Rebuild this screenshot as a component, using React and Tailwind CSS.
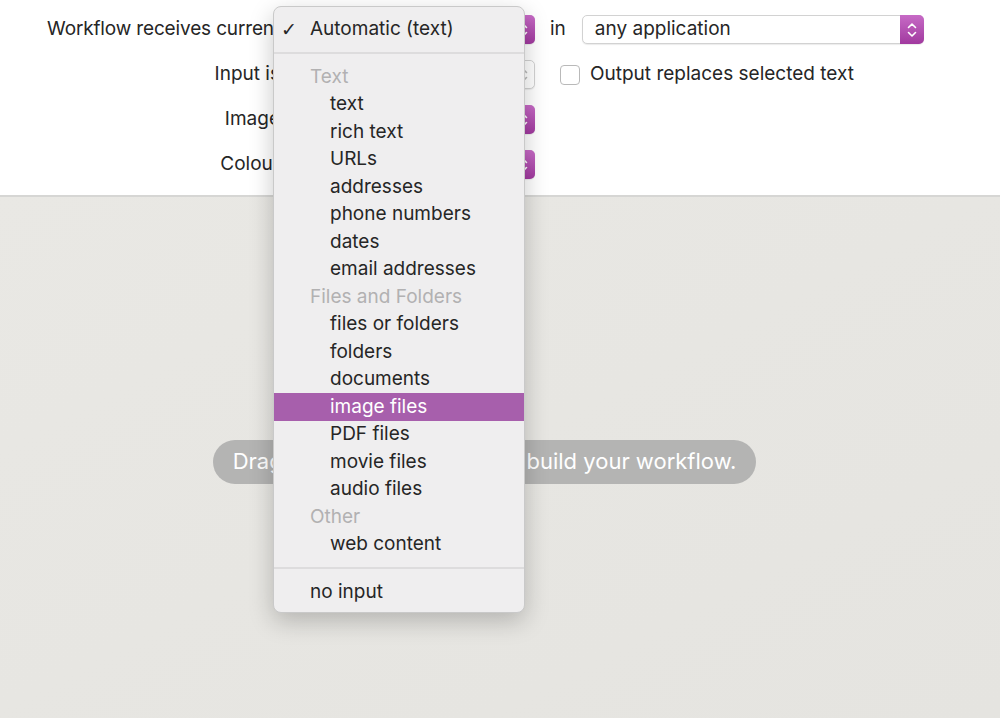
import React from "react";

const font = { fontFamily: "Inter, 'Liberation Sans', sans-serif" };

function Chevrons({ color = "white" }) {
  return (
    <svg width="10" height="16" viewBox="0 0 10 16" fill="none" stroke={color} strokeWidth="1.6" strokeLinecap="round" strokeLinejoin="round">
      <path d="M1.5 5.5 L5 2 L8.5 5.5" />
      <path d="M1.5 10.5 L5 14 L8.5 10.5" />
    </svg>
  );
}

function Popup({ label, className = "", disabled = false }) {
  return (
    <div className={"flex h-[29px] items-stretch rounded-[5px] border border-[#d2d2d2] bg-white shadow-[0_1px_1px_rgba(0,0,0,0.08)] " + className}>
      <div className="flex flex-1 items-center pl-[12px] text-[19px] text-[#262626]">{label}</div>
      {disabled ? (
        <div className="flex w-[24px] items-center justify-center rounded-r-[5px] border-l border-[#e0e0e0] bg-white">
          <Chevrons color="#b8b8b8" />
        </div>
      ) : (
        <div className="-my-px -mr-px flex w-[24px] items-center justify-center rounded-r-[5px] bg-gradient-to-b from-[#c76ac6] to-[#a1399f]">
          <Chevrons />
        </div>
      )}
    </div>
  );
}

const items = [
  { t: "Text", h: true },
  { t: "text" },
  { t: "rich text" },
  { t: "URLs" },
  { t: "addresses" },
  { t: "phone numbers" },
  { t: "dates" },
  { t: "email addresses" },
  { t: "Files and Folders", h: true },
  { t: "files or folders" },
  { t: "folders" },
  { t: "documents" },
  { t: "image files", sel: true },
  { t: "PDF files" },
  { t: "movie files" },
  { t: "audio files" },
  { t: "Other", h: true },
  { t: "web content" },
];

function Sep() {
  return (
    <div className="flex h-[20.5px] items-center">
      <div className="h-[2px] w-full bg-[#dddcdd]" />
    </div>
  );
}

export default function App() {
  return (
    <div className="relative flex h-[718px] w-[1000px] flex-col overflow-hidden bg-[#e7e6e2]" style={font}>
      {/* Top settings panel */}
      <div className="h-[197px] shrink-0 border-b-2 border-[#d6d6d4] bg-white pt-[15px]">
        <div className="grid grid-cols-[280px_247px_auto] items-center gap-x-[8px] gap-y-[16px] text-[19px] text-[#262626]">
          <div className="text-right whitespace-nowrap tracking-[-0.15px]">Workflow receives current</div>
          <Popup label="Automatic (text)" />
          <div className="flex items-center">
            <span className="ml-[7px] mr-[16px]">in</span>
            <Popup label="any application" className="w-[342px]" />
          </div>

          <div className="text-right">Input is</div>
          <Popup label="entire selection" disabled />
          <div className="flex items-center pl-[17px]">
            <div className="h-[20px] w-[20px] rounded-[4px] border border-[#b9b9b9] bg-white" />
            <span className="ml-[10px]">Output replaces selected text</span>
          </div>

          <div className="text-right">Image</div>
          <Popup label="Action" />
          <div />

          <div className="text-right">Colour</div>
          <Popup label="Black" />
          <div />
        </div>
      </div>

      {/* Workflow canvas */}
      <div className="flex flex-1 items-center justify-center bg-gradient-to-br from-[#e9e8e4] to-[#e5e4e0] pr-[31px] pt-[8px]">
        <div className="flex h-[44px] w-[543px] items-center justify-center rounded-full bg-[#b4b4b3] text-[22px] text-white">
          Drag actions or files here to build your workflow.
        </div>
      </div>

      {/* Dropdown menu overlay */}
      <div className="absolute left-[273px] top-[6px] w-[252px] rounded-[8px] border border-[#c9c9c9] bg-[#efeeef] pb-[6px] pt-[8px] text-[19px] text-[#262626] shadow-[0_8px_24px_rgba(0,0,0,0.22)]">
        <div className="relative flex h-[27.5px] items-center pl-[36px]">
          <span className="absolute left-[7px] text-[19px] font-bold" style={{ fontFamily: "'DejaVu Sans', sans-serif" }}>✓</span>
          Automatic (text)
        </div>
        <Sep />
        {items.map((it) => (
          <div
            key={it.t}
            className={
              "flex h-[27.5px] items-center " +
              (it.h ? "pl-[36px] text-[#b2b1b2]" : "pl-[56px]") +
              (it.sel ? " bg-[#a75fac] text-white" : "")
            }
          >
            {it.t}
          </div>
        ))}
        <Sep />
        <div className="flex h-[27.5px] items-center pl-[36px]">no input</div>
      </div>
    </div>
  );
}
